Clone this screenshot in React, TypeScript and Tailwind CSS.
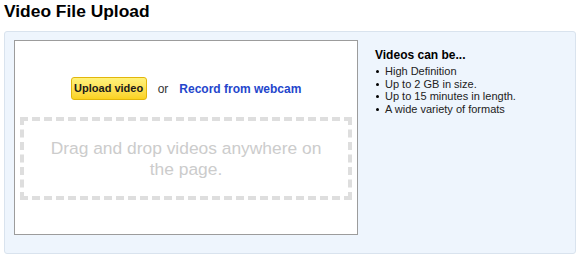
import React from "react";

const items = [
  "High Definition",
  "Up to 2 GB in size.",
  "Up to 15 minutes in length.",
  "A wide variety of formats",
];

export default function App() {
  return (
    <div className="w-[580px] h-[258px] bg-white font-['Liberation_Sans',Arial,sans-serif] text-[#222]">
      <h1 className="pt-[1px] pl-[4px] text-[17.4px] leading-[21px] font-bold text-black h-[31px]">
        Video File Upload
      </h1>
      <div className="ml-[4px] w-[572px] h-[223px] border border-[#d9e3ee] bg-[#eef5fd] rounded-[3px] flex pl-[9px] pt-[8px]">
        <div className="w-[344px] h-[195px] bg-white border border-[#9c9c9c] flex flex-col">
          <div className="mt-[36px] flex items-center justify-center">
            <button className="w-[76px] h-[23px] rounded-[3px] border border-[#e2b60c] bg-gradient-to-b from-[#fff27a] to-[#fbd21c] text-[11px] font-bold text-[#1a1a1a] leading-none">
              Upload video
            </button>
            <span className="ml-[11px] text-[12px] text-[#333]">or</span>
            <a className="ml-[11px] text-[12px] font-bold text-[#2446cc] cursor-pointer">
              Record from webcam
            </a>
          </div>
          <div className="mt-[17px] mx-[5px] h-[83px] border-[4px] border-dashed border-[#dedede] flex items-center justify-center text-center">
            <p className="text-[17.4px] leading-[21px] text-[#cccccc] px-[20px]">
              Drag and drop videos anywhere on the page.
            </p>
          </div>
        </div>
        <div className="ml-[17px] pt-[8px]">
          <div className="text-[12px] leading-[15px] font-bold text-black">Videos can be...</div>
          <ul className="mt-[2px]">
            {items.map((t) => (
              <li key={t} className="flex items-center text-[11px] leading-[12.7px] text-[#222]">
                <span className="ml-[1px] mr-[6px] w-[3px] h-[3px] rounded-full bg-black" />
                {t}
              </li>
            ))}
          </ul>
        </div>
      </div>
    </div>
  );
}
